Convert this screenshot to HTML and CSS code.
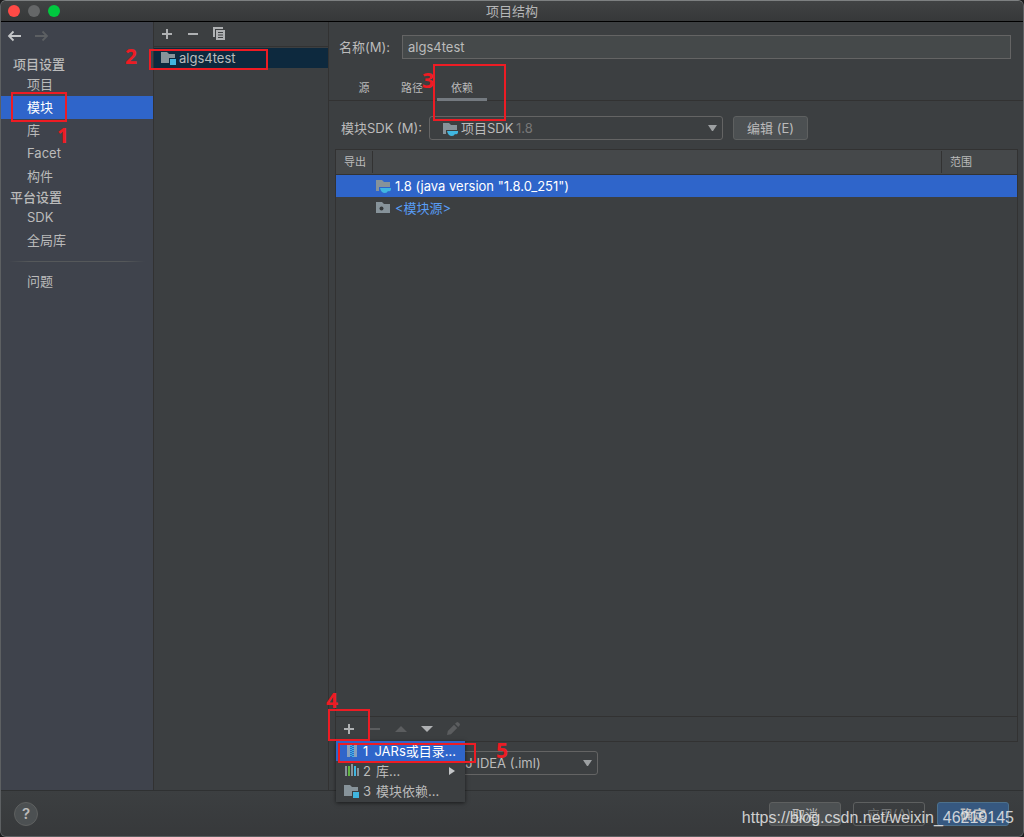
FILE: index.html
```html
<!DOCTYPE html>
<html lang="zh-CN">
<head>
<meta charset="utf-8">
<title>项目结构</title>
<link rel="stylesheet" href="styles.css">
</head>
<body>
<svg class="defs" width="0" height="0" aria-hidden="true">
  <symbol id="folder" viewBox="0 0 16 16"><path fill="#87939a" d="M0 2h6l2 2h6v9H0z"/></symbol>
  <symbol id="module" viewBox="0 0 16 16"><path fill="#87939a" d="M0 2h6l2 2h6v4H8v5H0z"/><path fill="#40b6e0" d="M9 9h6v6H9z"/></symbol>
  <symbol id="sdk" viewBox="0 0 16 16"><path fill="#87939a" d="M0 2h6l2 2h6v5H3v4H0z"/><path fill="#40b6e0" d="M4 10h11v1.500a2 2 0 0 1-3 1.500q-.8 2-3 2-4 0-5-5z"/></symbol>
  <symbol id="source" viewBox="0 0 16 16"><path fill="#87939a" d="M0 2h6l2 2h6v9H0z"/><circle cx="5.500" cy="8.500" r="2" fill="#34383a"/></symbol>
  <symbol id="plus" viewBox="0 0 16 16"><path d="M8 3v10M3 8h10" stroke="#afb1b3" stroke-width="2"/></symbol>
  <symbol id="minus" viewBox="0 0 16 16"><path d="M3 8h10" stroke="currentColor" stroke-width="2"/></symbol>
  <symbol id="down" viewBox="0 0 16 16"><path fill="#afb1b3" d="M2 5h12l-6 6z"/></symbol>
</svg>
<div class="window">
  <header class="titlebar">
    <div class="lights"><button class="light red" aria-label="关闭"></button><button class="light gray" aria-label="最小化"></button><button class="light green" aria-label="缩放"></button></div>
    <h1 class="title">项目结构</h1>
  </header>
  <div class="content">
    <nav class="sidebar">
      <div class="history">
        <button class="tool" aria-label="后退"><svg class="icon" viewBox="0 0 16 16"><path d="M15 8H3M7.500 3.500 3 8l4.500 4.500" fill="none" stroke="#c4c6c8" stroke-width="1.800"/></svg></button>
        <button class="tool" aria-label="前进"><svg class="icon" viewBox="0 0 16 16"><path d="M1 8h12M8.500 3.500 13 8l-4.500 4.500" fill="none" stroke="#5c5f62" stroke-width="1.800"/></svg></button>
      </div>
      <h2 class="group">项目设置</h2>
      <a class="nav" href="#project">项目</a>
      <a class="nav active" href="#modules">模块</a>
      <a class="nav" href="#libraries">库</a>
      <a class="nav" href="#facets">Facet</a>
      <a class="nav" href="#artifacts">构件</a>
      <h2 class="group platform">平台设置</h2>
      <a class="nav" href="#sdks">SDK</a>
      <a class="nav" href="#global">全局库</a>
      <div class="divider"></div>
      <a class="nav" href="#problems">问题</a>
    </nav>
    <section class="modules">
      <div class="module-tools">
        <button class="tool" aria-label="添加"><svg class="icon"><use href="#plus"/></svg></button>
        <button class="tool" aria-label="移除"><svg class="icon light-ink"><use href="#minus"/></svg></button>
        <button class="tool" aria-label="复制"><svg class="icon" viewBox="0 0 16 16"><path d="M3 11V2h9" fill="none" stroke="#afb1b3" stroke-width="2"/><path fill="#afb1b3" d="M5 4h9v10H5z"/><path d="M7 6.500h5M7 9h5M7 11.500h5" stroke="#3c3f41"/></svg></button>
      </div>
      <a class="module-row" href="#algs4test"><svg class="icon"><use href="#module"/></svg>algs4test</a>
    </section>
    <main class="main">
      <div class="name-row">
        <label for="name">名称(M):</label>
        <input class="field" id="name" type="text" value="algs4test">
      </div>
      <div class="tabs" role="tablist">
        <button class="tab" role="tab">源</button>
        <button class="tab" role="tab">路径</button>
        <button class="tab selected" role="tab" aria-selected="true">依赖</button>
      </div>
      <div class="panel">
        <div class="sdk-row">
          <label for="sdk-select">模块SDK (M):</label>
          <div class="combo sdk-combo">
            <svg class="icon combo-icon"><use href="#sdk"/></svg>
            <select class="select with-icon" id="sdk-select"><option>项目SDK</option></select>
            <span class="version">1.8</span>
            <svg class="icon arrow"><path fill="#9da0a2" d="M4 5h9l-4 6H8z"/></svg>
          </div>
          <button class="button edit">编辑 (E)</button>
        </div>
        <div class="deps">
          <table class="table">
            <colgroup><col class="col-export"><col><col class="col-scope"></colgroup>
            <thead><tr><th><span>导出</span></th><th><span>&nbsp;</span></th><th><span>范围</span></th></tr></thead>
            <tbody>
              <tr class="current"><td></td><td><div class="dep"><svg class="icon"><use href="#sdk"/></svg>1.8 (java version "1.8.0_251")</div></td><td></td></tr>
              <tr><td></td><td><div class="dep link"><svg class="icon"><use href="#source"/></svg>&lt;模块源&gt;</div></td><td></td></tr>
            </tbody>
          </table>
          <div class="dep-tools">
            <button class="tool" aria-label="添加"><svg class="icon"><use href="#plus"/></svg></button>
            <button class="tool" aria-label="移除"><svg class="icon dim-ink"><use href="#minus"/></svg></button>
            <button class="tool" aria-label="上移"><svg class="icon" viewBox="0 0 16 16"><path fill="#5b5d5f" d="M2 11h12L8 5z"/></svg></button>
            <button class="tool" aria-label="下移"><svg class="icon"><use href="#down"/></svg></button>
            <button class="tool" aria-label="编辑"><svg class="icon" viewBox="0 0 16 16"><path fill="#5b5d5f" d="m2 14 .8-4L9 3.800 12.200 7 6 13.200zM10 2.800l1.400-1.400q1-.8 2 0l1.200 1.200q.8 1 0 2L13.200 6z"/></svg></button>
            <div class="menu" role="menu">
              <button class="item hot" role="menuitem"><svg class="icon" viewBox="0 0 16 16"><path fill="#87a0bd" d="M3 2h3v12H3zM10 2h3v12h-3z"/><path d="M7 2v12" stroke="#40b6e0" stroke-width="2" stroke-dasharray="1 1"/><path d="M9 3v11" stroke="#40b6e0" stroke-width="2" stroke-dasharray="1 1"/></svg><span class="key">1</span>JARs或目录...</button>
              <button class="item" role="menuitem"><svg class="icon" viewBox="0 0 16 16"><path fill="#87939a" d="M1 3h2v10H1zM7 1h2v12H7zM13 5h2v8h-2z"/><path fill="#62b543" d="M4 3h2v10H4z"/><path fill="#40b6e0" d="M10 3h2v10h-2z"/></svg><span class="key">2</span>库...<svg class="submenu" viewBox="0 0 8 8"><path fill="#c4c6c8" d="M1 0l6 4-6 4z"/></svg></button>
              <button class="item" role="menuitem"><svg class="icon"><use href="#module"/></svg><span class="key">3</span>模块依赖...</button>
            </div>
          </div>
        </div>
        <div class="format-row">
          <label for="format">依赖格式:</label>
          <div class="combo format-combo">
            <select class="select format-select" id="format"><option>IntelliJ IDEA (.iml)</option></select>
            <svg class="icon arrow"><path fill="#9da0a2" d="M4 5h9l-4 6H8z"/></svg>
          </div>
        </div>
      </div>
    </main>
  </div>
  <footer class="footer">
    <button class="help" aria-label="帮助">?</button>
    <div class="actions">
      <button class="button">取消</button>
      <button class="button disabled" disabled>应用(A)</button>
      <button class="button primary">确定</button>
    </div>
  </footer>
  <div class="frame b1"></div><span class="num n1">1</span>
  <div class="frame b2"></div><span class="num n2">2</span>
  <div class="frame b3"></div><span class="num n3">3</span>
  <div class="frame b4"></div><span class="num n4">4</span>
  <div class="frame b5"></div><span class="num n5">5</span>
  <div class="watermark">https://blog.csdn.net/weixin_46219145</div>
</div>
</body>
</html>
```
FILE: styles.css
```css
* { box-sizing: border-box; }
body {
  margin: 0;
  background: #1b1c1d;
  color: #bbbbbb;
  font: 13px/18px Inter, "Noto Sans CJK SC", sans-serif;
}
button, input, select { font: inherit; color: inherit; margin: 0; }
a { color: inherit; text-decoration: none; }
h1, h2 { margin: 0; font-size: 13px; font-weight: 400; }
.defs { position: absolute; }
.icon { width: 16px; height: 16px; display: block; flex: none; }
.light-ink { color: #afb1b3; }
.dim-ink { color: #5b5d5f; }

.window {
  position: relative;
  display: flex;
  flex-direction: column;
  min-height: 100vh;
  border: 1px solid #5d6062;
  border-top-color: #7d8081;
  border-radius: 6px;
  background: #3c3f41;
  overflow: hidden;
}
.titlebar {
  position: relative;
  display: flex;
  align-items: center;
  justify-content: center;
  height: 21px;
  background: linear-gradient(#414344, #363839);
  border-bottom: 1px solid #000;
}
.title { color: #b6b7b8; }
.lights { position: absolute; left: 7px; top: 4px; display: flex; gap: 8px; }
.light { width: 12px; height: 12px; border: 0; padding: 0; border-radius: 50%; }
.red { background: #ff4a46; }
.gray { background: #656768; }
.green { background: #00c83f; }

.content { flex: 1; display: flex; }
.sidebar {
  width: 153px;
  flex: none;
  background: #3f434c;
  border-right: 1px solid #323232;
}
.history { display: flex; gap: 12px; padding: 6px 5px 11px; }
.tool { padding: 0; border: 0; background: none; width: 16px; height: 16px; }
.group { height: 18px; padding-left: 12px; font-weight: 500; }
.platform { padding-left: 9px; }
.nav { display: block; height: 23px; line-height: 22px; padding-left: 26px; }
.nav.active { background: #2f65ca; color: #fff; }
.divider {
  height: 1px;
  margin: 9px 8px 8px;
  background: linear-gradient(90deg, transparent, #55585a 15%, #55585a 85%, transparent);
}

.modules { width: 175px; flex: none; border-right: 1px solid #323232; }
.module-tools {
  display: flex;
  gap: 10px;
  height: 25px;
  padding: 4px 5px;
  border-bottom: 1px solid #323232;
}
.module-row {
  display: flex;
  align-items: center;
  gap: 2px;
  height: 20px;
  margin-top: 1px;
  padding-left: 7px;
  background: #0d293e;
}

.main { flex: 1; min-width: 0; display: flex; flex-direction: column; }
.name-row { display: flex; align-items: center; padding: 13px 12px 0 10px; }
.name-row label { width: 63px; }
.field {
  flex: 1;
  min-width: 0;
  height: 24px;
  padding: 0 5px;
  border: 1px solid #646464;
  background: #45494a;
  outline: 0;
}
.tabs {
  display: flex;
  height: 42px;
  padding: 13px 0 0 12px;
  border-bottom: 1px solid #323232;
}
.tab {
  height: 29px;
  min-width: 46px;
  padding: 5px 14px 0;
  border: 0;
  border-bottom: 3px solid transparent;
  background: none;
  font-size: 11px;
}
.tab.selected { border-color: #747a80; }
.panel { flex: 1; display: flex; flex-direction: column; padding: 15px 5px 15px 6px; }
.sdk-row { display: flex; align-items: center; padding-left: 6px; }
.sdk-row label { width: 88px; }
.combo { position: relative; height: 24px; }
.sdk-combo { width: 294px; }
.select {
  appearance: none;
  width: 100%;
  height: 24px;
  padding: 0 8px;
  border: 1px solid #646464;
  border-radius: 3px;
  background: #3c3f41;
}
.with-icon { padding-left: 31px; }
.format-select { padding-left: 13px; }
.combo-icon { position: absolute; left: 14px; top: 5px; }
.version { position: absolute; left: 87px; top: 3px; color: #777777; }
.arrow { position: absolute; right: 3px; top: 4px; pointer-events: none; }
.button {
  width: 72px;
  height: 24px;
  padding: 0;
  border: 1px solid #5e6060;
  border-radius: 3px;
  background: #4c5052;
}
.edit { width: 75px; margin-left: 10px; }

.deps {
  flex: 1;
  display: flex;
  flex-direction: column;
  justify-content: space-between;
  margin-top: 9px;
  border: 1px solid #323232;
}
.table { width: 100%; border-collapse: separate; border-spacing: 0; table-layout: fixed; }
.col-export { width: 36px; }
.col-scope { width: 76px; }
th {
  height: 25px;
  padding: 0;
  background: #45484a;
  border-bottom: 1px solid #323232;
  font-size: 11px;
  font-weight: 400;
  text-align: left;
}
th span { display: block; height: 22px; line-height: 22px; padding-left: 8px; border-left: 1px solid #323232; }
th:first-child span { border-left: 0; }
td { height: 22px; padding: 0; }
.dep { display: flex; align-items: center; gap: 3px; padding-left: 4px; height: 22px; }
.current { background: #2f65ca; color: #fff; }
.link { color: #589df6; }
.dep-tools {
  position: relative;
  display: flex;
  gap: 10px;
  height: 25px;
  padding: 4px 5px;
  border-top: 1px solid #323232;
}
.menu {
  position: absolute;
  left: 0;
  top: 24px;
  z-index: 2;
  width: 129px;
  padding-bottom: 1px;
  background: #3c3f41;
  box-shadow: 0 1px 4px rgba(0, 0, 0, .6);
}
.item {
  display: flex;
  align-items: center;
  width: 100%;
  height: 20px;
  padding: 0 9px 0 8px;
  border: 0;
  background: none;
  white-space: nowrap;
}
.item.hot { background: #2f65ca; color: #fff; }
.key { width: 13px; margin-left: 3px; text-align: left; }
.submenu { width: 8px; height: 8px; margin-left: auto; }
.format-row { display: flex; align-items: center; padding: 9px 0 0 6px; }
.format-row label { width: 78px; }
.format-combo { width: 179px; }

.footer {
  display: flex;
  justify-content: space-between;
  height: 46px;
  padding: 11px 14px 0 13px;
  border-top: 1px solid #2f3132;
  background: linear-gradient(#3c3f41, #37393b);
}
.help {
  width: 24px;
  height: 24px;
  padding: 0;
  border: 1px solid #5e6060;
  border-radius: 50%;
  background: #4c5052;
  font-size: 15px;
  font-weight: 600;
}
.actions { display: flex; gap: 12px; }
.disabled { background: transparent; color: #6f7172; }
.primary { background: #365880; border-color: #4c708c; font-weight: 600; }

.frame { position: absolute; z-index: 3; border: 2px solid #ed1c24; pointer-events: none; }
.num { position: absolute; z-index: 3; color: #ed1c24; font: bold 21px/22px "Noto Sans", sans-serif; }
.b1 { left: 10px; top: 91px; width: 56px; height: 30px; }
.b2 { left: 148px; top: 48px; width: 119px; height: 21px; }
.b3 { left: 432px; top: 63px; width: 73px; height: 57px; }
.b4 { left: 327px; bottom: 95px; width: 42px; height: 32px; }
.b5 { left: 337px; bottom: 73px; width: 138px; height: 20px; }
.n1 { left: 56px; top: 123px; }
.n2 { left: 124px; top: 44px; }
.n3 { left: 421px; top: 68px; }
.n4 { left: 325px; bottom: 125px; }
.n5 { left: 495px; bottom: 75px; }
.watermark {
  position: absolute;
  z-index: 4;
  right: 9px;
  bottom: 8px;
  color: rgba(235, 235, 235, .85);
  font: 16px/20px "Liberation Sans", sans-serif;
  pointer-events: none;
}
```
